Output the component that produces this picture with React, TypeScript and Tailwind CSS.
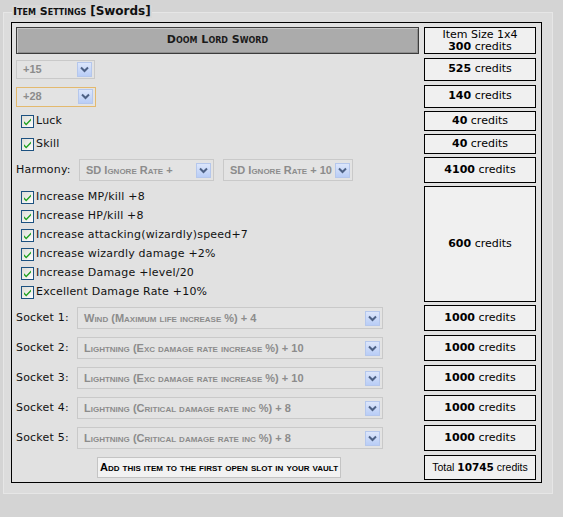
import React from "react";

const V = { fontFamily: '"DejaVu Sans", Verdana, sans-serif' };
const A = { fontFamily: '"Liberation Sans", Arial, sans-serif' };

function Check() {
  return (
    <svg width="13" height="13" viewBox="0 0 13 13" className="shrink-0">
      <defs>
        <linearGradient id="cbg" x1="0" y1="0" x2="1" y2="1">
          <stop offset="0" stopColor="#dcdcd5" />
          <stop offset="1" stopColor="#ffffff" />
        </linearGradient>
      </defs>
      <rect x="0.5" y="0.5" width="12" height="12" fill="url(#cbg)" stroke="#1c5180" />
      <path d="M3 6.2 L5.2 8.6 L10 3.6 L10 5.6 L5.2 10.4 L3 8.2 Z" fill="#21a121" />
    </svg>
  );
}

function Arrow() {
  return (
    <div className="w-[15px] h-[15px] shrink-0 border border-[#b5c7ec] bg-gradient-to-b from-[#dce6fb] to-[#b9cdf6] flex items-center justify-center">
      <svg width="9" height="7" viewBox="0 0 9 7">
        <path d="M1 1.5 L4.5 5 L8 1.5" fill="none" stroke="#4d6185" strokeWidth="2" />
      </svg>
    </div>
  );
}

function Select({
  text,
  className,
  border = "border-[#c9c9c9]",
}: {
  text: React.ReactNode;
  className: string;
  border?: string;
}) {
  return (
    <div
      className={`flex items-center justify-between border ${border} bg-[#e3e3e3] pl-[6px] pr-[2px] ${className}`}
    >
      <span
        className="text-[11px] font-bold text-[#8c8c8c] whitespace-nowrap"
        style={{ ...A, fontVariant: "small-caps" }}
      >
        {text}
      </span>
      <Arrow />
    </div>
  );
}

function Credits({ n, h }: { n: string; h: string }) {
  return (
    <div
      className={`w-[112px] ${h} border border-black bg-[#f0f0f0] flex items-center justify-center text-[11px] text-black shrink-0`}
      style={V}
    >
      <b>{n}</b>&nbsp;credits
    </div>
  );
}

function CheckLabel({ label }: { label: string }) {
  return (
    <div
      className="flex items-center gap-[2px] h-[19px] pl-[5px] text-[11px] tracking-[0.2px] text-[#111]"
      style={V}
    >
      <Check />
      <span>{label}</span>
    </div>
  );
}

function Row({
  left,
  right,
  className = "",
}: {
  left: React.ReactNode;
  right: React.ReactNode;
  className?: string;
}) {
  return (
    <div className={`flex gap-[5px] items-center ${className}`}>
      <div className="w-[403px] flex items-center">{left}</div>
      {right}
    </div>
  );
}

export default function App() {
  const sockets = [
    "Wind (Maximum life increase %) + 4",
    "Lightning (Exc damage rate increase %) + 10",
    "Lightning (Exc damage rate increase %) + 10",
    "Lightning (Critical damage rate inc %) + 8",
    "Lightning (Critical damage rate inc %) + 8",
  ];
  return (
    <div className="w-[563px] h-[517px] bg-[#d4d4d4] pt-[12px] pl-[3px] overflow-hidden">
      <div className="relative w-[550px] h-[482px] border border-[#e6e6e6] bg-[#dcdcdc]">
        <div
          className="absolute left-[8px] top-[-8px] bg-[#d8d8d8] px-[1px] text-[11px] font-bold text-[#111] leading-[13px]"
          style={V}
        >
          <span style={{ fontVariant: "small-caps" }}>Item Settings</span>{" "}
          <span className="text-[12px]">[Swords]</span>
        </div>
        <div className="ml-[7px] mt-[9px] w-[531px] h-[461px] border border-black bg-[#e1e1e1] pt-[4px] pl-[4px]">
          <Row
            left={
              <div className="w-[404px] h-[27px] border border-[#3c3c3c] bg-[#ababab] shadow-[inset_1px_1px_0_#c8c8c8,inset_-1px_-1px_0_#8e8e8e] flex items-center justify-center">
                <span
                  className="text-[11px] font-bold text-[#1a1a1a]"
                  style={{ ...V, fontVariant: "small-caps" }}
                >
                  Doom Lord Sword
                </span>
              </div>
            }
            right={
              <div
                className="w-[112px] h-[27px] border border-black bg-[#f0f0f0] flex flex-col items-center justify-center text-[11px] leading-[12px] text-black"
                style={V}
              >
                <span>Item Size 1x4</span>
                <span>
                  <b>300</b> credits
                </span>
              </div>
            }
          />
          <Row
            className="mt-[4px]"
            left={<Select text="+15" className="w-[79px] h-[19px]" />}
            right={<Credits n="525" h="h-[23px]" />}
          />
          <Row
            className="mt-[4px]"
            left={
              <Select
                text="+28"
                className="w-[80px] h-[20px]"
                border="border-[#e3b96e]"
              />
            }
            right={<Credits n="140" h="h-[23px]" />}
          />
          <Row
            className="mt-[3px]"
            left={<CheckLabel label="Luck" />}
            right={<Credits n="40" h="h-[20px]" />}
          />
          <Row
            className="mt-[3px]"
            left={<CheckLabel label="Skill" />}
            right={<Credits n="40" h="h-[20px]" />}
          />
          <Row
            className="mt-[3px]"
            left={
              <div className="flex items-center">
                <span className="w-[63px] text-[11px] tracking-[0.2px] text-[#111]" style={V}>
                  Harmony:
                </span>
                <Select text="SD Ignore Rate +" className="w-[135px] h-[22px]" />
                <Select text="SD Ignore Rate + 10" className="w-[130px] h-[22px] ml-[9px]" />
              </div>
            }
            right={<Credits n="4100" h="h-[26px]" />}
          />
          <Row
            className="mt-[3px]"
            left={
              <div className="flex flex-col pt-[2px]">
                <CheckLabel label="Increase MP/kill +8" />
                <CheckLabel label="Increase HP/kill +8" />
                <CheckLabel label="Increase attacking(wizardly)speed+7" />
                <CheckLabel label="Increase wizardly damage +2%" />
                <CheckLabel label="Increase Damage +level/20" />
                <CheckLabel label="Excellent Damage Rate +10%" />
              </div>
            }
            right={<Credits n="600" h="h-[116px]" />}
          />
          {sockets.map((s, i) => (
            <Row
              key={i}
              className={i === 0 ? "mt-[3px]" : "mt-[4px]"}
              left={
                <div className="flex items-center">
                  <span className="w-[61px] text-[11px] tracking-[0.2px] text-[#111]" style={V}>
                    Socket {i + 1}:
                  </span>
                  <Select text={s} className="w-[306px] h-[22px]" />
                </div>
              }
              right={<Credits n="1000" h="h-[26px]" />}
            />
          ))}
          <Row
            className="mt-[4px]"
            left={
              <div className="w-full flex">
                <button
                  className="ml-[81px] w-[244px] h-[21px] border border-[#c4c4c4] bg-[#f2f2f2] text-[11px] font-bold text-black flex items-center justify-center"
                  style={{ ...A, fontVariant: "small-caps" }}
                >
                  Add this item to the first open slot in your vault
                </button>
              </div>
            }
            right={
              <div
                className="w-[112px] h-[25px] border border-black bg-[#f0f0f0] flex items-center justify-center text-[10.5px] text-black"
                style={A}
              >
                Total&nbsp;<b style={V}>10745</b>&nbsp;credits
              </div>
            }
          />
        </div>
      </div>
    </div>
  );
}
